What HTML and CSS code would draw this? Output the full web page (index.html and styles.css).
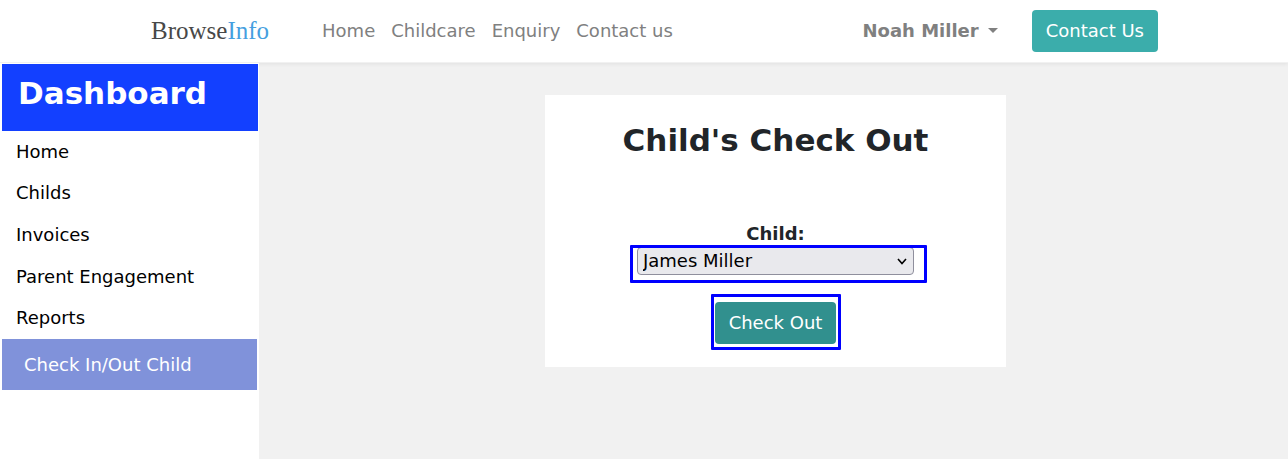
FILE: index.html
```html
<!DOCTYPE html>
<html lang="en">
<head>
<meta charset="utf-8">
<title>Child's Check Out</title>
<link rel="stylesheet" href="styles.css">
</head>
<body>
<header class="navbar">
  <a class="brand" href="#">Browse<span class="brand-accent">Info</span></a>
  <nav class="nav-links">
    <a href="#">Home</a>
    <a href="#">Childcare</a>
    <a href="#">Enquiry</a>
    <a href="#">Contact us</a>
  </nav>
  <button class="user-menu" type="button">Noah Miller<span class="caret"></span></button>
  <a class="btn btn-contact" href="#">Contact Us</a>
</header>
<div class="layout">
  <aside class="sidebar">
    <h2 class="sidebar-title">Dashboard</h2>
    <ul class="menu">
      <li><a href="#">Home</a></li>
      <li><a href="#">Childs</a></li>
      <li><a href="#">Invoices</a></li>
      <li><a href="#">Parent Engagement</a></li>
      <li><a href="#">Reports</a></li>
    </ul>
    <a class="menu-active" href="#">Check In/Out Child</a>
  </aside>
  <main class="content">
    <form class="card">
      <h1 class="card-title">Child's Check Out</h1>
      <label class="field-label" for="child">Child:</label>
      <div class="select-wrap">
        <select class="child-select" id="child"><option>James Miller</option></select>
        <svg class="chevron" viewBox="0 0 10 7" aria-hidden="true"><path d="M1 1l4 4.5L9 1"/></svg>
        <span class="highlight highlight-select"></span>
      </div>
      <div class="button-wrap">
        <button class="btn btn-checkout" type="button">Check Out</button>
        <span class="highlight highlight-button"></span>
      </div>
    </form>
  </main>
</div>
</body>
</html>
```
FILE: styles.css
```css
* {
  box-sizing: border-box;
}

body {
  display: flex;
  flex-direction: column;
  min-height: 100vh;
  margin: 0;
  background: #f1f1f1;
  color: #212529;
  font: 18px/26px "DejaVu Sans", sans-serif;
}

a {
  color: inherit;
  text-decoration: none;
}

.navbar {
  display: flex;
  align-items: center;
  padding: 10px 130px 10px 151px;
  background: #fff;
  border-bottom: 1px solid #f1f1f1;
  box-shadow: 0 1px 4px rgba(0, 0, 0, 0.07);
  color: #808080;
}

.brand {
  margin-right: 53px;
  color: #484848;
  font: 25px/30px "Liberation Serif", serif;
}

.brand-accent {
  color: #459fe0;
}

.nav-links {
  display: flex;
  gap: 16px;
  margin-right: auto;
}

.user-menu {
  display: flex;
  align-items: center;
  gap: 9px;
  margin-right: 34px;
  padding: 0;
  border: 0;
  background: none;
  color: inherit;
  font: inherit;
  font-weight: bold;
}

.caret {
  margin-bottom: 2px;
  border: 5px solid transparent;
  border-top-color: currentColor;
  border-bottom: 0;
}

.btn {
  padding: 8px 14px;
  border: 0;
  border-radius: 4px;
  color: #fff;
  font: inherit;
}

.btn-contact {
  background: #3badab;
}

.layout {
  display: flex;
  flex: 1;
}

.sidebar {
  position: relative;
  width: 259px;
  padding: 1px 1px 0 2px;
  background: #fff;
}

.sidebar-title {
  margin: 0;
  padding: 10px 16px 19px;
  background: #1340ff;
  color: #fff;
  font-size: 31px;
  line-height: 38px;
}

.menu {
  display: grid;
  grid-auto-rows: 1fr;
  height: 208px;
  margin: 0;
  padding: 0 14px;
  list-style: none;
  color: #000;
}

.menu li {
  display: flex;
  align-items: center;
}

.menu-active {
  display: block;
  margin-right: 1px;
  padding: 13px 22px 12px;
  background: #8092da;
  color: #fff;
}

.content {
  flex: 1;
  padding: 32px 0 32px 4px;
}

.card {
  display: flex;
  flex-direction: column;
  align-items: center;
  width: 45%;
  min-width: 340px;
  margin: 0 auto;
  padding: 26px 24px 23px;
  background: #fff;
}

.card-title {
  margin: 0 0 62px;
  font-size: 31px;
  line-height: 38px;
}

.field-label {
  font-weight: bold;
}

.select-wrap {
  position: relative;
  width: 277px;
  margin-bottom: 27px;
}

.child-select {
  display: block;
  width: 100%;
  height: 28px;
  padding: 0 24px 0 5px;
  appearance: none;
  border: 1px solid #8f8f9d;
  border-radius: 4px;
  background: #e9e9ed;
  color: #000;
  font: inherit;
}

.chevron {
  position: absolute;
  top: 11px;
  right: 7px;
  width: 10px;
  height: 7px;
  fill: none;
  stroke: #000;
  stroke-width: 1.6;
  pointer-events: none;
}

.button-wrap {
  position: relative;
}

.btn-checkout {
  display: block;
  background: #31908e;
}

.highlight {
  position: absolute;
  border: 3px solid #00f;
  border-radius: 1px;
  pointer-events: none;
}

.highlight-select {
  inset: -2px -13px -8px -7px;
}

.highlight-button {
  inset: -8px -5px -6px -4px;
}
```
